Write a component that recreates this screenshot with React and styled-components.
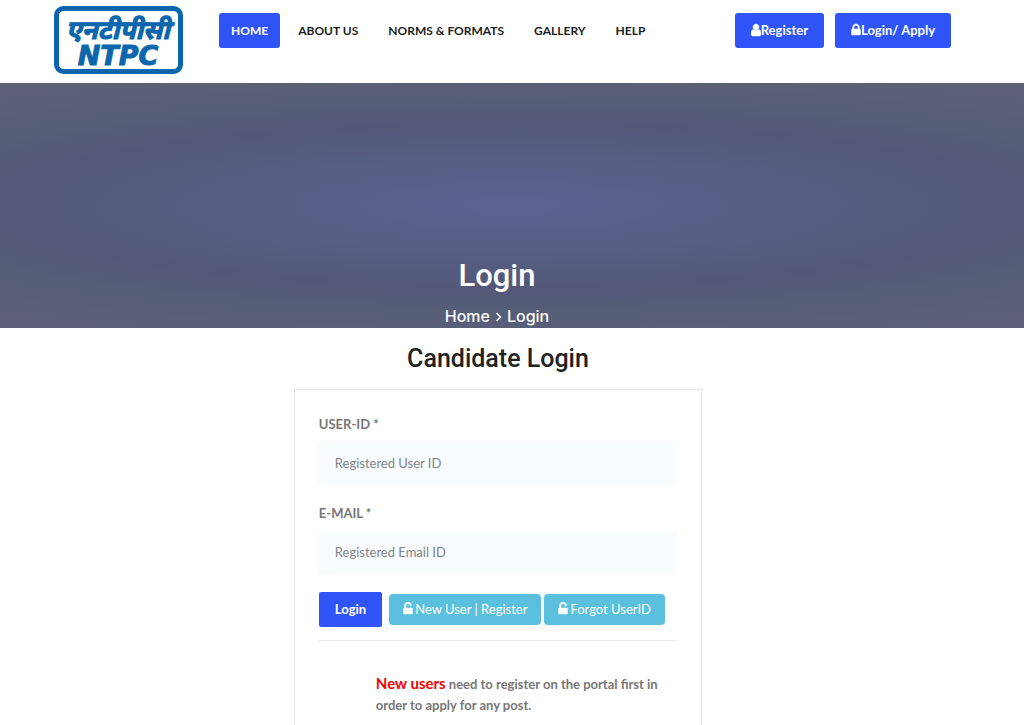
import React, { useState } from 'react';
import styled, { createGlobalStyle } from 'styled-components';

const GlobalStyle = createGlobalStyle`
  * {
    box-sizing: border-box;
  }

  body {
    margin: 0;
    background: #fff;
    color: #777;
    font-family: Lato, "Liberation Sans", sans-serif;
    font-size: 13px;
    line-height: 21px;
  }
`;

const Header = styled.header`
  display: flex;
  align-items: flex-start;
  padding: 6px 73px 9px 54px;
`;

const LogoLink = styled.a`
  display: block;
  height: 68px;
  margin-right: 36px;
`;

const Nav = styled.nav`
  display: flex;
  flex: 1;
  gap: 6px;
  padding-top: 7px;
`;

const NavLink = styled.a`
  padding: 7px 12px;
  border-radius: 3px;
  background: ${(props) => (props.$active ? '#2f55f9' : 'transparent')};
  color: ${(props) => (props.$active ? '#fff' : '#1b1d21')};
  font-size: 12px;
  font-weight: 700;
  text-decoration: none;
  text-transform: uppercase;
  white-space: nowrap;
`;

const HeaderActions = styled.div`
  display: flex;
  gap: 11px;
  padding-top: 7px;
`;

const Button = styled.button`
  display: inline-flex;
  align-items: center;
  height: 35px;
  padding: 0 16px 1px;
  border: 0;
  border-radius: 3px;
  background: #2f55f9;
  color: #fff;
  font-family: inherit;
  font-size: 13px;
  font-weight: 700;
  white-space: nowrap;
  cursor: pointer;
`;

const InfoButton = styled(Button)`
  height: 31px;
  padding: 0 14px 1px;
  border-radius: 4px;
  background: #5bc0de;
  font-weight: 400;
  gap: 2px;
`;

const Icon = styled.svg`
  width: 10px;
  height: 14px;
  fill: currentColor;
`;

const Banner = styled.section`
  display: flex;
  flex-direction: column;
  align-items: center;
  padding: 174px 30px 0 0;
  background: radial-gradient(98% 67% at 50% 50%, #5b6493 0%, #575f86 25%, #535878 50%, #555d77 64%, #5e6079 84%, #61617a 100%);
  color: #fff;
`;

const BannerTitle = styled.h1`
  margin: 0 0 11px;
  font-family: Roboto, sans-serif;
  font-size: 31px;
  font-weight: 500;
  line-height: 37px;
`;

const Breadcrumb = styled.nav`
  display: flex;
  align-items: center;
  gap: 5px;
  font-family: Inter, sans-serif;
  font-size: 16px;
  font-weight: 500;
  line-height: 23px;

  a {
    color: inherit;
    text-decoration: none;
  }
`;

const Chevron = styled.svg`
  width: 7px;
  height: 10px;
  fill: none;
  stroke: currentColor;
  stroke-width: 1.5;
`;

const Main = styled.main`
  display: flex;
  flex-direction: column;
  align-items: center;
  padding: 16px 28px 0 0;
`;

const Title = styled.h2`
  margin: 0 0 16px;
  color: #222;
  font-family: Roboto, sans-serif;
  font-size: 25px;
  font-weight: 500;
  line-height: 29px;
`;

const Card = styled.div`
  width: 41%;
  min-width: 408px;
  padding: 24px 24px 10px;
  border: 1px solid #e4e4e4;
  border-bottom: 0;
`;

const Field = styled.div`
  display: flex;
  flex-direction: column;
  gap: 7px;
  margin-bottom: 19px;
`;

const Label = styled.label`
  font-weight: 700;
`;

const Input = styled.input`
  width: 100%;
  height: 42px;
  padding: 0 16px 1px;
  border: 0;
  border-radius: 3px;
  background: #f8fbff;
  box-shadow: 0 1px 2px rgba(0, 0, 0, 0.03);
  color: #555;
  font-family: inherit;
  font-size: 13px;

  &::placeholder {
    color: #808488;
    opacity: 1;
  }
`;

const FormActions = styled.div`
  display: flex;
  align-items: center;
  gap: 3px;

  ${Button}:first-child {
    margin-right: 4px;
    border-radius: 2px;
  }
`;

const Divider = styled.hr`
  margin: 13px 0 33px;
  border: 0;
  border-top: 1px solid #e8e8e8;
`;

const Note = styled.p`
  margin: 0;
  padding-left: 57px;
  font-weight: 700;
`;

const Highlight = styled.span`
  color: #f30000;
  font-size: 15px;
  line-height: 18px;
`;

const icons = {
  user: 'M1536 1399q0 109-62.5 187t-150.5 78h-854q-88 0-150.5-78t-62.5-187q0-85 8.5-160.5t31.5-152 58.5-131 94-89 134.5-34.5q131 128 313 128t313-128q76 0 134.5 34.5t94 89 58.5 131 31.5 152 8.5 160.5zm-256-887q0 159-112.5 271.5t-271.5 112.5-271.5-112.5-112.5-271.5 112.5-271.5 271.5-112.5 271.5 112.5 112.5 271.5z',
  lock: 'M640 768h512v-192q0-106-75-181t-181-75-181 75-75 181v192zm832 96v576q0 40-28 68t-68 28h-960q-40 0-68-28t-28-68v-576q0-40 28-68t68-28h32v-192q0-184 132-316t316-132 316 132 132 316v192h32q40 0 68 28t28 68z',
  unlock: 'M1376 768q40 0 68 28t28 68v576q0 40-28 68t-68 28h-960q-40 0-68-28t-28-68v-576q0-40 28-68t68-28h32v-320q0-185 131.5-316.5t316.5-131.5 316.5 131.5 131.5 316.5q0 26-19 45t-45 19h-64q-26 0-45-19t-19-45q0-106-75-181t-181-75-181 75-75 181v320h736z',
};

const FaIcon = ({ name }) => (
  <Icon viewBox="256 0 1280 1792" aria-hidden="true">
    <path d={icons[name]} stroke="currentColor" strokeWidth="60" />
  </Icon>
);

const Logo = () => (
  <svg width="129" height="68" viewBox="0 0 129 68" role="img" aria-label="NTPC">
    <rect x="2.5" y="2.5" width="124" height="63" rx="7" fill="#fff" stroke="#0b66ad" strokeWidth="5" />
    <g fill="#0b66ad" stroke="#0b66ad" textAnchor="middle" fontWeight="700" fontStyle="italic">
      <text x="64" y="33" fontSize="26" strokeWidth="1" fontFamily='"Noto Sans Devanagari", "Noto Sans", sans-serif'>एनटीपीसी</text>
      <text x="64" y="59" fontSize="27" strokeWidth="1" fontFamily='"DejaVu Sans", sans-serif'>NTPC</text>
    </g>
  </svg>
);

const navItems = ['Home', 'About Us', 'Norms & Formats', 'Gallery', 'Help'];

const App = () => {
  const [userId, setUserId] = useState('');
  const [email, setEmail] = useState('');

  const handleSubmit = (e) => {
    e.preventDefault();
  };

  return (
    <>
      <GlobalStyle />
      <Header>
        <LogoLink href="#">
          <Logo />
        </LogoLink>
        <Nav>
          {navItems.map((item, index) => (
            <NavLink key={item} href="#" $active={index === 0}>{item}</NavLink>
          ))}
        </Nav>
        <HeaderActions>
          <Button type="button"><FaIcon name="user" />Register</Button>
          <Button type="button"><FaIcon name="lock" />Login/ Apply</Button>
        </HeaderActions>
      </Header>
      <Banner>
        <BannerTitle>Login</BannerTitle>
        <Breadcrumb>
          <a href="#">Home</a>
          <Chevron viewBox="0 0 7 10" aria-hidden="true">
            <path d="M1.5 1L5.5 5L1.5 9" />
          </Chevron>
          <span>Login</span>
        </Breadcrumb>
      </Banner>
      <Main>
        <Title>Candidate Login</Title>
        <Card>
          <form onSubmit={handleSubmit}>
            <Field>
              <Label htmlFor="userId">USER-ID *</Label>
              <Input
                id="userId"
                placeholder="Registered User ID"
                value={userId}
                onChange={(e) => setUserId(e.target.value)}
              />
            </Field>
            <Field>
              <Label htmlFor="email">E-MAIL *</Label>
              <Input
                id="email"
                type="email"
                placeholder="Registered Email ID"
                value={email}
                onChange={(e) => setEmail(e.target.value)}
              />
            </Field>
            <FormActions>
              <Button type="submit">Login</Button>
              <InfoButton type="button"><FaIcon name="unlock" />New User | Register</InfoButton>
              <InfoButton type="button"><FaIcon name="unlock" />Forgot UserID</InfoButton>
            </FormActions>
          </form>
          <Divider />
          <Note>
            <Highlight>New users</Highlight> need to register on the portal first in order to apply for any post.
          </Note>
        </Card>
      </Main>
    </>
  );
};

export default App;
